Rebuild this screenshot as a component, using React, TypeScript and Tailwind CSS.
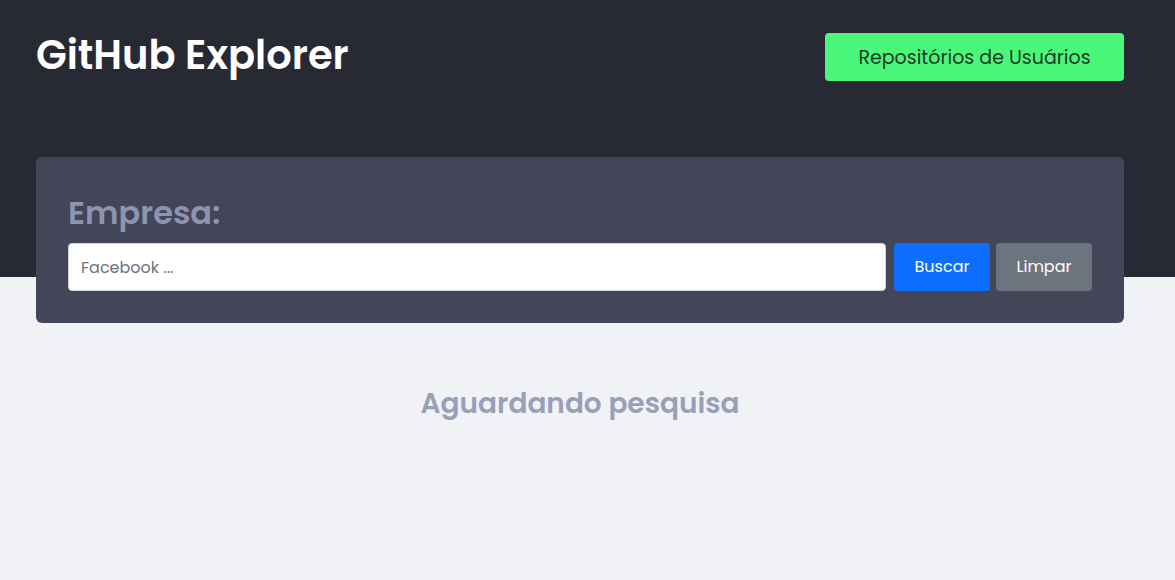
import React, { FC, useState } from "react";

const font = { fontFamily: "Poppins, 'Open Sans', 'Noto Sans', sans-serif" };

const SearchCard: FC = () => {
  const [query, setQuery] = useState("");

  return (
    <section className="rounded-md bg-[#434659] px-8 pt-8 pb-8">
      <h2 className="m-0 text-[32px] font-semibold leading-[48px] text-[#8e94af]">Empresa:</h2>
      <div className="mt-[6px] flex items-center">
        <input
          value={query}
          onChange={(e) => setQuery(e.target.value)}
          placeholder="Facebook ..."
          className="h-12 flex-1 rounded-[4px] border border-[#ced4da] bg-white px-3 text-base text-[#212529] outline-none placeholder:text-[#6c757d]"
        />
        <button className="ml-2 h-12 w-24 rounded-[4px] bg-[#0d6efd] text-base text-white">Buscar</button>
        <button
          onClick={() => setQuery("")}
          className="ml-[6px] h-12 w-24 rounded-[4px] bg-[#6c757d] text-base text-white"
        >
          Limpar
        </button>
      </div>
    </section>
  );
};

export default function App() {
  return (
    <div className="min-h-[580px] bg-[#f0f2f5]" style={font}>
      <header className="bg-[#272935] pl-9 pr-[51px] pt-[33px] pb-[196px]">
        <div className="flex h-12 items-start justify-between">
          <h1 className="m-0 text-[40px] font-semibold leading-[44px] text-white">GitHub Explorer</h1>
          <button className="h-12 w-[299px] rounded-[4px] bg-[#4bf77a] pt-[2px] text-[19px] text-[#1b3a25]">
            Repositórios de Usuários
          </button>
        </div>
      </header>
      <main className="-mt-[120px] pl-9 pr-[51px]">
        <SearchCard />
        <p className="mt-[60px] text-center text-[28px] font-semibold text-[#9a9fb9]">Aguardando pesquisa</p>
      </main>
    </div>
  );
}
